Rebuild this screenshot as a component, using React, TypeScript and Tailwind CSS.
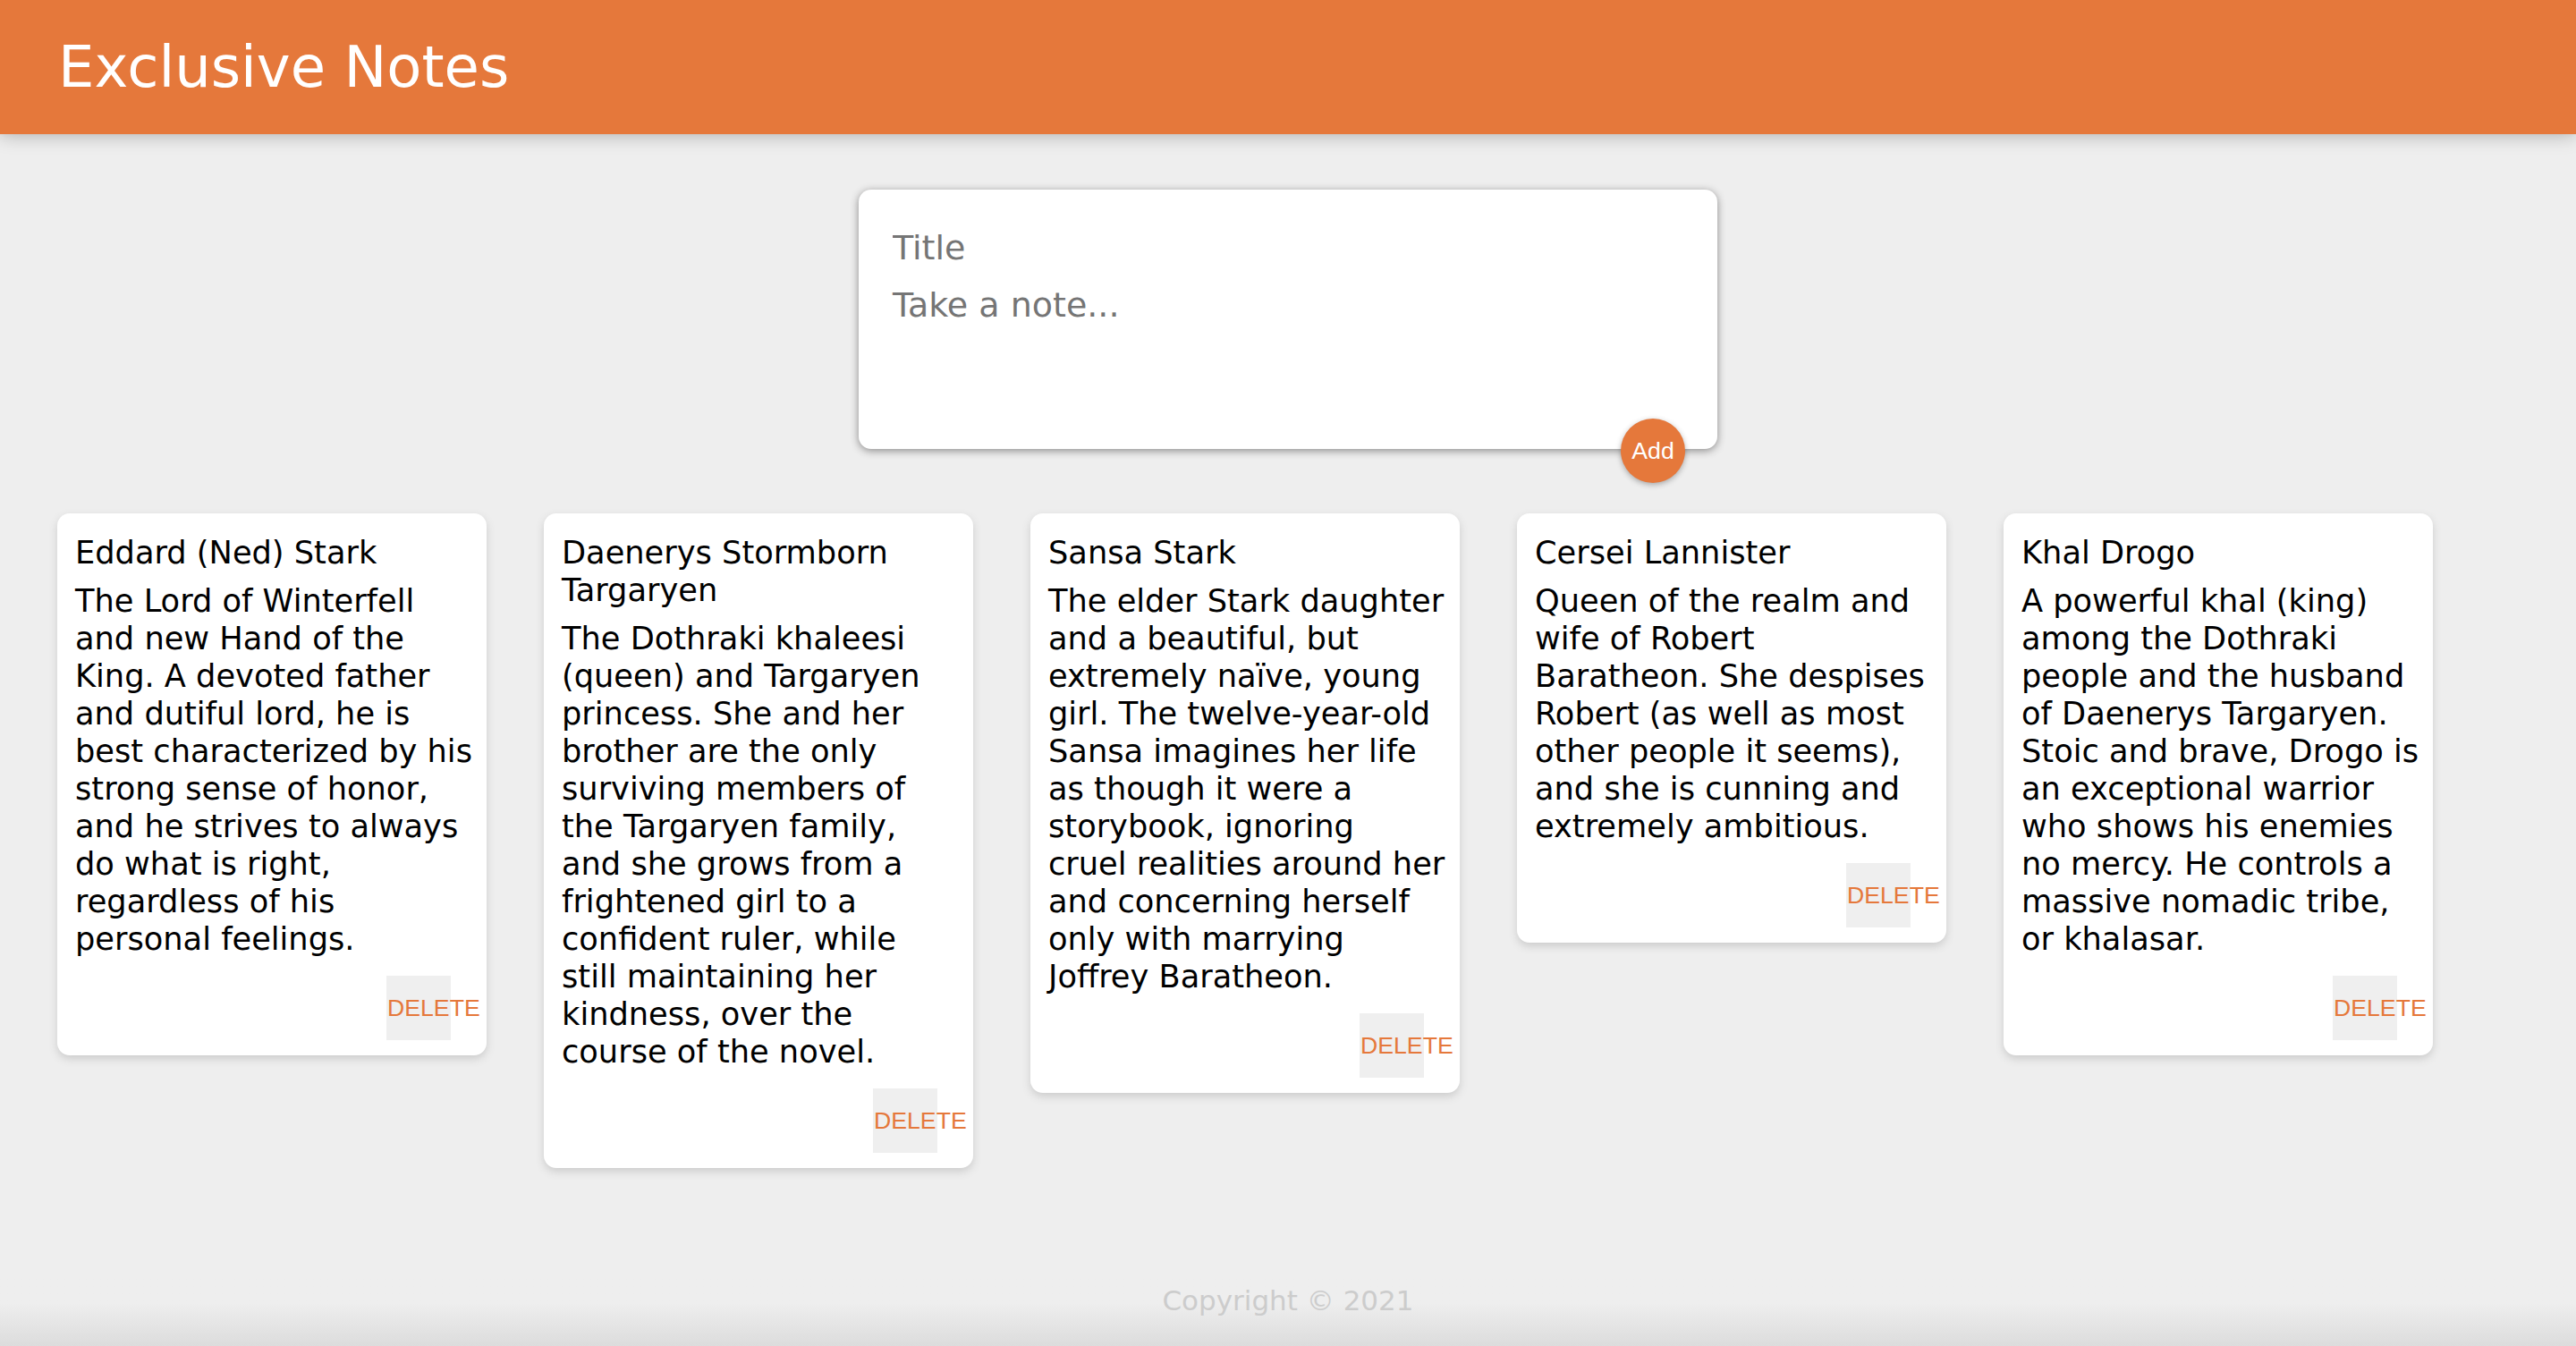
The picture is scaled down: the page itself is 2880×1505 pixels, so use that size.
import React, { useState } from 'react';

interface Note {
  id: number;
  title: string[];
  lines: string[];
}

const NOTES: Note[] = [
  {
    id: 1,
    title: ['Eddard (Ned) Stark'],
    lines: [
      'The Lord of Winterfell',
      'and new Hand of the',
      'King. A devoted father',
      'and dutiful lord, he is',
      'best characterized by his',
      'strong sense of honor,',
      'and he strives to always',
      'do what is right,',
      'regardless of his',
      'personal feelings.',
    ],
  },
  {
    id: 2,
    title: ['Daenerys Stormborn', 'Targaryen'],
    lines: [
      'The Dothraki khaleesi',
      '(queen) and Targaryen',
      'princess. She and her',
      'brother are the only',
      'surviving members of',
      'the Targaryen family,',
      'and she grows from a',
      'frightened girl to a',
      'confident ruler, while',
      'still maintaining her',
      'kindness, over the',
      'course of the novel.',
    ],
  },
  {
    id: 3,
    title: ['Sansa Stark'],
    lines: [
      'The elder Stark daughter',
      'and a beautiful, but',
      'extremely naïve, young',
      'girl. The twelve-year-old',
      'Sansa imagines her life',
      'as though it were a',
      'storybook, ignoring',
      'cruel realities around her',
      'and concerning herself',
      'only with marrying',
      'Joffrey Baratheon.',
    ],
  },
  {
    id: 4,
    title: ['Cersei Lannister'],
    lines: [
      'Queen of the realm and',
      'wife of Robert',
      'Baratheon. She despises',
      'Robert (as well as most',
      'other people it seems),',
      'and she is cunning and',
      'extremely ambitious.',
    ],
  },
  {
    id: 5,
    title: ['Khal Drogo'],
    lines: [
      'A powerful khal (king)',
      'among the Dothraki',
      'people and the husband',
      'of Daenerys Targaryen.',
      'Stoic and brave, Drogo is',
      'an exceptional warrior',
      'who shows his enemies',
      'no mercy. He controls a',
      'massive nomadic tribe,',
      'or khalasar.',
    ],
  },
];

const NoteCard: React.FC<{ note: Note; onDelete: (id: number) => void }> = ({ note, onDelete }) => (
  <div className="w-[480px] shrink-0 rounded-[14px] bg-white px-[20px] pt-[23px] pb-[17px] shadow-[0_4px_10px_#cccccc]">
    <h1 className="mb-[12px] text-[35.2px] leading-[42px] font-normal text-black">
      {note.title.map((t) => (
        <span key={t} className="block whitespace-nowrap">{t}</span>
      ))}
    </h1>
    <p className="mb-[20px] text-[35.2px] leading-[42px] text-black">
      {note.lines.map((l) => (
        <span key={l} className="block whitespace-nowrap">{l}</span>
      ))}
    </p>
    <div className="flex justify-end pr-[20px]">
      <button
        onClick={() => onDelete(note.id)}
        className="flex h-[72px] w-[72px] items-center overflow-visible bg-[#efefef] font-['Liberation_Sans',Arial,sans-serif] text-[26.67px] text-[#e5783b]"
      >
        <span className="whitespace-nowrap pl-px">DELETE</span>
      </button>
    </div>
  </div>
);

export default function App() {
  const [notes, setNotes] = useState<Note[]>(NOTES);
  const [title, setTitle] = useState('');
  const [content, setContent] = useState('');

  const addNote = () => {
    if (!title.trim() && !content.trim()) return;
    setNotes([...notes, { id: Date.now(), title: [title], lines: content.split('\n') }]);
    setTitle('');
    setContent('');
  };

  return (
    <div className="flex min-h-screen flex-col bg-[#eeeeee] font-['DejaVu_Sans',sans-serif]">
      {/* Header */}
      <header className="relative z-10 flex h-[150px] items-center bg-[#e5783b] pl-[65px] shadow-[0_0_20px_rgba(0,0,0,0.3)]">
        <h1 className="text-[64px] leading-[150px] font-normal text-white">Exclusive Notes</h1>
      </header>

      {/* Create note */}
      <div className="relative mx-auto mt-[62px] w-[960px] rounded-[14px] bg-white p-[30px] shadow-[0_2px_10px_rgb(138,137,137)]">
        <input
          value={title}
          onChange={(e) => setTitle(e.target.value)}
          placeholder="Title"
          className="block h-[63px] w-full px-[8px] pt-[11px] pb-[5px] text-[38px] outline-none placeholder:text-[#757575]"
        />
        <textarea
          value={content}
          onChange={(e) => setContent(e.target.value)}
          placeholder="Take a note..."
          className="block h-[167px] w-full resize-none px-[8px] pt-[13px] pb-[4px] text-[38px] leading-[46px] outline-none placeholder:text-[#757575]"
        />
        <button
          onClick={addNote}
          className="absolute right-[36px] bottom-[-38px] flex h-[72px] w-[72px] items-center justify-center rounded-full bg-[#e5783b] font-['Liberation_Sans',Arial,sans-serif] text-[26.67px] text-white shadow-[0_2px_6px_rgba(0,0,0,0.3)]"
        >
          Add
        </button>
      </div>

      {/* Notes */}
      <div className="mt-[72px] flex items-start gap-[64px] pl-[64px]">
        {notes.map((n) => (
          <NoteCard key={n.id} note={n} onDelete={(id) => setNotes(notes.filter((x) => x.id !== id))} />
        ))}
      </div>

      {/* Footer */}
      <footer className="mt-auto h-[80px] bg-linear-to-b from-[#eeeeee] from-40% to-[#dcdcdc] pt-[10px] text-center">
        <p className="text-[31px] leading-[39px] text-[#cccccc]">Copyright © 2021</p>
      </footer>
    </div>
  );
}
